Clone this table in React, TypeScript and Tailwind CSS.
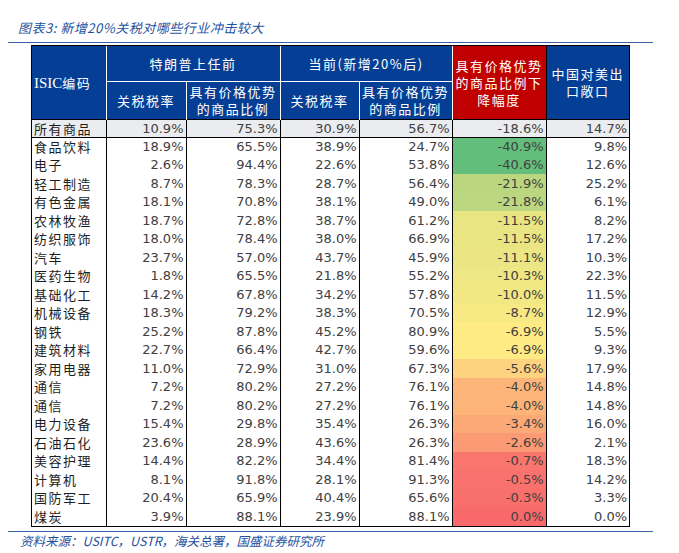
import React from 'react';

const total = ['10.9%', '75.3%', '30.9%', '56.7%', '-18.6%', '14.7%'];

const rows: [string, string, string, string, string, number, string][] = [
  ['食品饮料', '18.9%', '65.5%', '38.9%', '24.7%', -40.9, '9.8%'],
  ['电子', '2.6%', '94.4%', '22.6%', '53.8%', -40.6, '12.6%'],
  ['轻工制造', '8.7%', '78.3%', '28.7%', '56.4%', -21.9, '25.2%'],
  ['有色金属', '18.1%', '70.8%', '38.1%', '49.0%', -21.8, '6.1%'],
  ['农林牧渔', '18.7%', '72.8%', '38.7%', '61.2%', -11.5, '8.2%'],
  ['纺织服饰', '18.0%', '78.4%', '38.0%', '66.9%', -11.5, '17.2%'],
  ['汽车', '23.7%', '57.0%', '43.7%', '45.9%', -11.1, '10.3%'],
  ['医药生物', '1.8%', '65.5%', '21.8%', '55.2%', -10.3, '22.3%'],
  ['基础化工', '14.2%', '67.8%', '34.2%', '57.8%', -10.0, '11.5%'],
  ['机械设备', '18.3%', '79.2%', '38.3%', '70.5%', -8.7, '12.9%'],
  ['钢铁', '25.2%', '87.8%', '45.2%', '80.9%', -6.9, '5.5%'],
  ['建筑材料', '22.7%', '66.4%', '42.7%', '59.6%', -6.9, '9.3%'],
  ['家用电器', '11.0%', '72.9%', '31.0%', '67.3%', -5.6, '17.9%'],
  ['通信', '7.2%', '80.2%', '27.2%', '76.1%', -4.0, '14.8%'],
  ['通信', '7.2%', '80.2%', '27.2%', '76.1%', -4.0, '14.8%'],
  ['电力设备', '15.4%', '29.8%', '35.4%', '26.3%', -3.4, '16.0%'],
  ['石油石化', '23.6%', '28.9%', '43.6%', '26.3%', -2.6, '2.1%'],
  ['美容护理', '14.4%', '82.2%', '34.4%', '81.4%', -0.7, '18.3%'],
  ['计算机', '8.1%', '91.8%', '28.1%', '91.3%', -0.5, '14.2%'],
  ['国防军工', '20.4%', '65.9%', '40.4%', '65.6%', -0.3, '3.3%'],
  ['煤炭', '3.9%', '88.1%', '23.9%', '88.1%', 0.0, '0.0%'],
];

// excel-style 3 colour scale: min green, median yellow, max red
const heat = (v: number) => {
  const lo = -40.9, mid = -6.9, hi = 0;
  const g = [99, 190, 123], y = [255, 235, 132], r = [248, 105, 107];
  let a = g, b = y, t = 0;
  if (v <= mid) { t = (v - lo) / (mid - lo); }
  else { a = y; b = r; t = (v - mid) / (hi - mid); }
  const c = a.map((x, i) => Math.round(x + (b[i] - x) * t));
  return `rgb(${c[0]},${c[1]},${c[2]})`;
};

const th = "text-white font-normal text-[13px] tracking-[1.5px] leading-[17px] text-center align-middle font-['Noto_Sans_CJK_SC',sans-serif]";
const label = "pl-[2px] text-[13px] tracking-[1.5px] leading-[17px] text-[#1e1e1e] border-r border-black font-['Noto_Sans_CJK_SC',sans-serif]";
const cell = "text-right pr-[2px] text-[13px] leading-[17px] text-[#404040] font-['DejaVu_Sans',Verdana,sans-serif]";

export default function App() {
  return (
    <div className="w-[679px] h-[553px] bg-white overflow-hidden">
      <div className="h-[42px] pt-[19px] pl-[18px] text-[13px] tracking-[0.5px] leading-[18px] italic text-[#24519e] font-['Noto_Sans_CJK_SC',sans-serif]">
        图表3: 新增20%关税对哪些行业冲击较大
      </div>
      <div className="ml-[8px] w-[645px] h-px bg-[#3a62a6]" />

      <div className="ml-[31px] mt-[2px] w-[599px] border border-black">
        <table className="table-fixed border-collapse w-[597px]">
          <colgroup>
            <col className="w-[74px]" />
            <col className="w-[80px]" />
            <col className="w-[94px]" />
            <col className="w-[79px]" />
            <col className="w-[93px]" />
            <col className="w-[94px]" />
            <col className="w-[83px]" />
          </colgroup>
          <thead>
            <tr className="h-[35px] bg-[#053f95]">
              <th rowSpan={2} className="text-white font-normal text-left pl-[2px] border-r border-white align-middle">
                <span className="text-[15px] font-['Liberation_Serif',serif]">ISIC</span>
                <span className="text-[13px] tracking-[1.5px] font-['Noto_Sans_CJK_SC',sans-serif]">编码</span>
              </th>
              <th colSpan={2} className={`${th} border-r border-b border-white`}>特朗普上任前</th>
              <th colSpan={2} className={`${th} border-b border-white`}>当前(新增20%后)</th>
              <th rowSpan={2} className={`${th} bg-[#c00000] border-l border-white border-r border-r-black px-[3px]`}>
                具有价格优势的商品比例下降幅度
              </th>
              <th rowSpan={2} className={`${th} px-[4px]`}>中国对美出口敞口</th>
            </tr>
            <tr className="h-[38px] bg-[#053f95]">
              <th className={`${th} border-r border-white`}>关税税率</th>
              <th className={`${th} border-r border-white px-[2px]`}>具有价格优势的商品比例</th>
              <th className={`${th} border-r border-white`}>关税税率</th>
              <th className={`${th} px-[2px]`}>具有价格优势的商品比例</th>
            </tr>
          </thead>
          <tbody>
            <tr className="h-[18px] bg-[#ebecef] border-t border-b border-black">
              <td className={label}>所有商品</td>
              {total.map((v, i) => (
                <td key={i} className={i < 5 ? `${cell} border-r border-black` : cell}>{v}</td>
              ))}
            </tr>
            {rows.map((r, idx) => (
              <tr key={idx} className="h-[18.5px]">
                <td className={label}>{r[0]}</td>
                {[r[1], r[2], r[3], r[4]].map((v, i) => (
                  <td key={i} className={`${cell} border-r border-black`}>{v}</td>
                ))}
                <td className={`${cell} border-r border-black`} style={{ backgroundColor: heat(r[5]) }}>
                  {r[5].toFixed(1)}%
                </td>
                <td className={cell}>{r[6]}</td>
              </tr>
            ))}
          </tbody>
        </table>
      </div>

      <div className="ml-[8px] mt-[4px] w-[645px] h-px bg-[#3a62a6]" />
      <div className="pl-[20px] mt-[1px] text-[12.5px] leading-[16px] italic text-[#24519e] font-['Noto_Sans_CJK_SC',sans-serif]">
        资料来源：USITC，USTR，海关总署，国盛证券研究所
      </div>
    </div>
  );
}
